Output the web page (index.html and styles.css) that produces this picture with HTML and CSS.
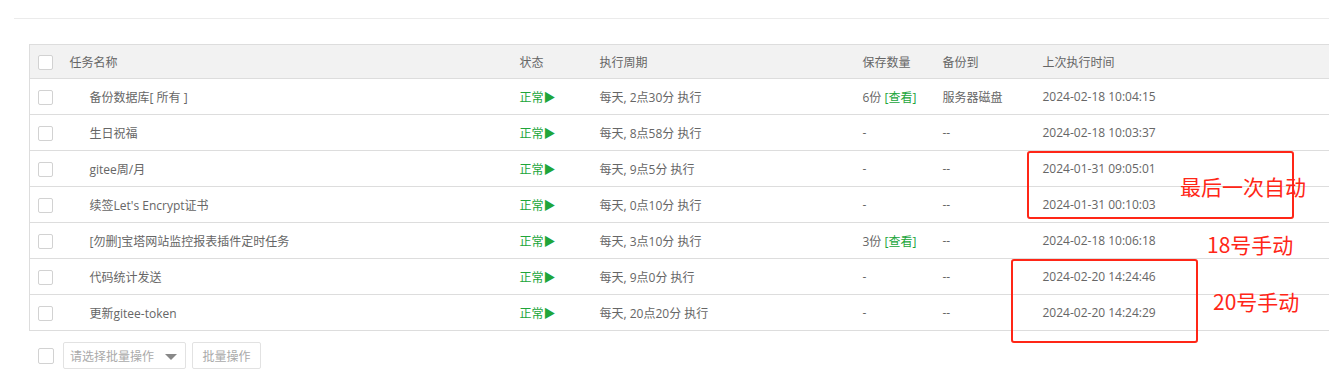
FILE: index.html
```html
<!DOCTYPE html>
<html lang="zh-CN">
<head>
<meta charset="utf-8">
<title>计划任务</title>
<link rel="stylesheet" href="styles.css">
</head>
<body>
<div class="page">
  <div class="topbar"><span class="title">计划任务</span></div>
  <div class="panel">
    <table class="tasks">
      <colgroup>
        <col class="c-check"><col class="c-name"><col class="c-status"><col class="c-cycle"><col class="c-save"><col class="c-to"><col class="c-last">
      </colgroup>
      <thead>
        <tr>
          <th><span class="cb"></span></th>
          <th class="hname">任务名称</th>
          <th>状态</th>
          <th>执行周期</th>
          <th>保存数量</th>
          <th>备份到</th>
          <th>上次执行时间</th>
        </tr>
      </thead>
      <tbody>
        <tr>
          <td><span class="cb"></span></td>
          <td class="name">备份数据库[ 所有 ]</td>
          <td class="ok">正常▶</td>
          <td>每天, 2点30分 执行</td>
          <td>6份 <span class="link">[查看]</span></td>
          <td>服务器磁盘</td>
          <td>2024-02-18 10:04:15</td>
        </tr>
        <tr>
          <td><span class="cb"></span></td>
          <td class="name">生日祝福</td>
          <td class="ok">正常▶</td>
          <td>每天, 8点58分 执行</td>
          <td>-</td>
          <td>--</td>
          <td>2024-02-18 10:03:37</td>
        </tr>
        <tr>
          <td><span class="cb"></span></td>
          <td class="name">gitee周/月</td>
          <td class="ok">正常▶</td>
          <td>每天, 9点5分 执行</td>
          <td>-</td>
          <td>--</td>
          <td>2024-01-31 09:05:01</td>
        </tr>
        <tr>
          <td><span class="cb"></span></td>
          <td class="name">续签Let's Encrypt证书</td>
          <td class="ok">正常▶</td>
          <td>每天, 0点10分 执行</td>
          <td>-</td>
          <td>--</td>
          <td>2024-01-31 00:10:03</td>
        </tr>
        <tr>
          <td><span class="cb"></span></td>
          <td class="name">[勿删]宝塔网站监控报表插件定时任务</td>
          <td class="ok">正常▶</td>
          <td>每天, 3点10分 执行</td>
          <td>3份 <span class="link">[查看]</span></td>
          <td>--</td>
          <td>2024-02-18 10:06:18</td>
        </tr>
        <tr>
          <td><span class="cb"></span></td>
          <td class="name">代码统计发送</td>
          <td class="ok">正常▶</td>
          <td>每天, 9点0分 执行</td>
          <td>-</td>
          <td>--</td>
          <td>2024-02-20 14:24:46</td>
        </tr>
        <tr>
          <td><span class="cb"></span></td>
          <td class="name">更新gitee-token</td>
          <td class="ok">正常▶</td>
          <td>每天, 20点20分 执行</td>
          <td>-</td>
          <td>--</td>
          <td>2024-02-20 14:24:29</td>
        </tr>
      </tbody>
    </table>
    <div class="batch">
      <span class="cb"></span>
      <div class="select"><span>请选择批量操作</span><span class="caret"></span></div>
      <button class="btn">批量操作</button>
    </div>
  </div>

  <div class="mark box1"></div>
  <div class="note n1">最后一次自动</div>
  <div class="note n2">18号手动</div>
  <div class="mark box2"></div>
  <div class="note n3">20号手动</div>
</div>
</body>
</html>
```

FILE: styles.css
```css
html, body {
  margin: 0;
  padding: 0;
  background: #fff;
  overflow: hidden;
}
.page {
  position: relative;
  width: 1329px;
  height: 382px;
  overflow: hidden;
  font-family: "Open Sans", "Noto Sans CJK SC", sans-serif;
  font-size: 12px;
  color: #666;
}
.topbar {
  margin-left: 14px;
  height: 18px;
  border-bottom: 1px solid #ebebeb;
  position: relative;
  overflow: hidden;
}
.title {
  display: block;
  margin-top: -16px;
  padding-left: 16px;
  font-size: 14px;
  line-height: 16px;
  color: #666;
}
.panel {
  padding-left: 29px;
  padding-top: 25px;
}
.tasks {
  width: 1320px;
  table-layout: fixed;
  border-collapse: collapse;
  border: 1px solid #ddd;
}
.c-check { width: 32px; }
.c-name { width: 450px; }
.c-status { width: 80px; }
.c-cycle { width: 263px; }
.c-save { width: 80px; }
.c-to { width: 100px; }
.c-last { width: 315px; }
.tasks th {
  background: #f2f2f2;
  height: 33px;
  font-weight: normal;
  text-align: left;
  padding: 0 8px;
  color: #666;
  border-bottom: 1px solid #ddd;
  white-space: nowrap;
}
.tasks td {
  height: 35px;
  padding: 0 8px;
  border-bottom: 1px solid #ddd;
  white-space: nowrap;
  color: #666;
}
.tasks th:first-child, .tasks td:first-child {
  padding: 0 0 0 8px;
}
.tasks td.name {
  padding-left: 28px;
}
.cb {
  display: inline-block;
  width: 13px;
  height: 13px;
  border: 1px solid #d2d2d2;
  border-radius: 2px;
  background: #fff;
  vertical-align: middle;
}
.tasks td.ok {
  color: #20a53a;
}
.link {
  color: #20a53a;
}
.batch {
  display: flex;
  align-items: center;
  gap: 10px;
  padding: 11px 0 0 9px;
}
.batch .cb {
  width: 14px;
  height: 14px;
}
.select {
  border: 1px solid #e2e2e2;
  border-radius: 2px;
  display: flex;
  align-items: center;
  justify-content: space-between;
  padding: 0 8px 0 6px;
  box-sizing: border-box;
  width: 123px;
  height: 27px;
  color: #aaa;
  margin-left: -1px;
}
.caret {
  width: 0;
  height: 0;
  border-left: 6px solid transparent;
  border-right: 6px solid transparent;
  border-top: 6px solid #888;
  margin-top: 2px;
}
.btn {
  height: 27px;
  width: 69px;
  margin-left: -4px;
  border: 1px solid #e2e2e2;
  border-radius: 2px;
  background: #fff;
  color: #aaa;
  font-family: inherit;
  font-size: 12px;
  padding: 0;
}
.mark {
  position: absolute;
  border: 2px solid #ff2617;
  border-radius: 3px;
  box-sizing: border-box;
}
.box1 {
  left: 1027px;
  top: 151px;
  width: 267px;
  height: 68px;
}
.box2 {
  left: 1011px;
  top: 259px;
  width: 187px;
  height: 84px;
}
.note {
  position: absolute;
  color: #ff2617;
  font-size: 21px;
  line-height: 21px;
  white-space: nowrap;
  font-family: "Noto Sans CJK SC", sans-serif;
}
.n1 { left: 1180px; top: 176px; }
.n2 { left: 1207px; top: 234px; }
.n3 { left: 1213px; top: 291px; }
```
